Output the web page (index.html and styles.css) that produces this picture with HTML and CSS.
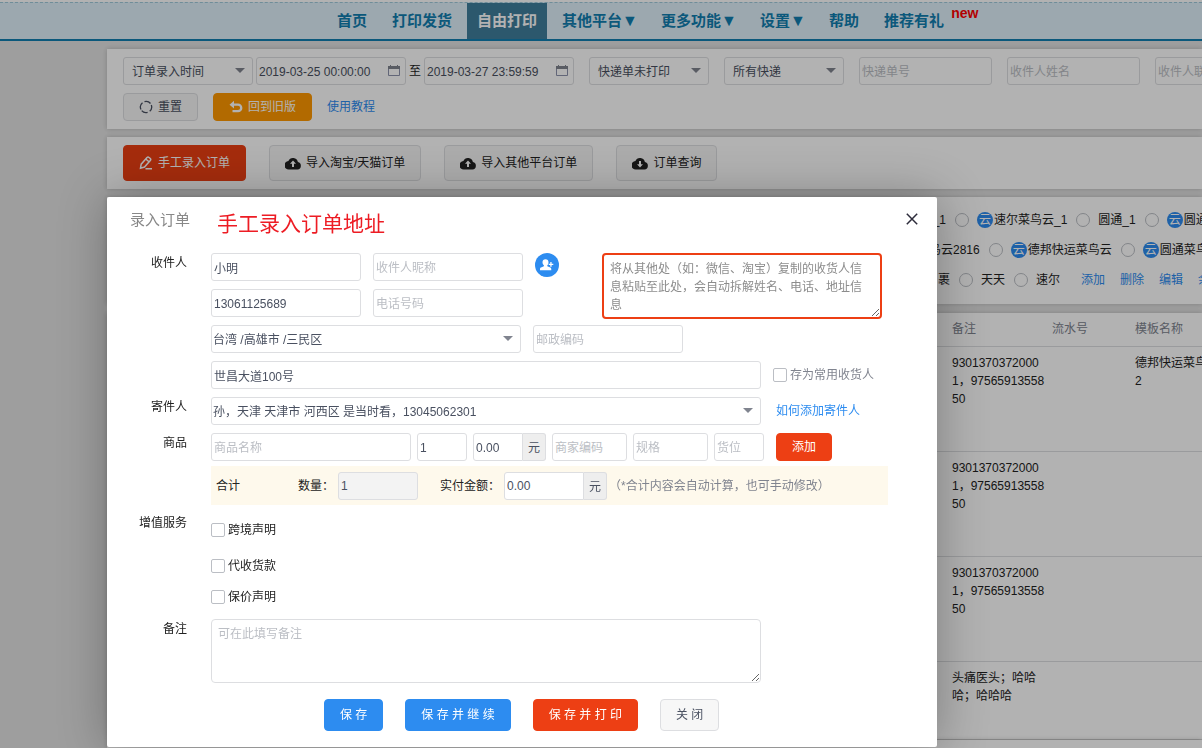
FILE: index.html
```html
<!DOCTYPE html>
<html lang="zh-CN">
<head>
<meta charset="utf-8">
<title>自由打印 - 录入订单</title>
<link rel="stylesheet" href="styles.css">
</head>
<body>
<div class="app">
  <nav class="nav">
    <a class="nav-item" href="#">首页</a>
    <a class="nav-item" href="#">打印发货</a>
    <a class="nav-item active" href="#">自由打印</a>
    <a class="nav-item" href="#">其他平台<span class="nav-caret">▼</span></a>
    <a class="nav-item" href="#">更多功能<span class="nav-caret">▼</span></a>
    <a class="nav-item" href="#">设置<span class="nav-caret">▼</span></a>
    <a class="nav-item" href="#">帮助</a>
    <a class="nav-item" href="#">推荐有礼<span class="nav-new">new</span></a>
  </nav>

  <main class="content">
    <section class="card filters">
      <div class="filter-row">
        <div class="filter-range">
          <span class="select w-130"><select class="field inset" aria-label="时间类型"><option>订单录入时间</option></select></span>
          <span class="date"><input class="field" type="text" value="2019-03-25 00:00:00" aria-label="开始时间"><svg class="cal" viewBox="0 0 12 12"><path d="M.5 1.500h11v9H.5z" fill="none" stroke="#8d92ad"/><path d="M0 1h12v3H0zM2 0h1v1H2zM9 0h1v1H9z" fill="#80848f"/></svg></span>
          <span class="to">至</span>
          <span class="date"><input class="field" type="text" value="2019-03-27 23:59:59" aria-label="结束时间"><svg class="cal" viewBox="0 0 12 12"><path d="M.5 1.500h11v9H.5z" fill="none" stroke="#8d92ad"/><path d="M0 1h12v3H0zM2 0h1v1H2zM9 0h1v1H9z" fill="#80848f"/></svg></span>
        </div>
        <span class="select w-120"><select class="field inset" aria-label="快递单状态"><option>快递单未打印</option></select></span>
        <span class="select w-120"><select class="field inset" aria-label="快递"><option>所有快递</option></select></span>
        <input class="field w-133" type="text" placeholder="快递单号" aria-label="快递单号">
        <input class="field w-133" type="text" placeholder="收件人姓名" aria-label="收件人姓名">
        <input class="field w-133" type="text" placeholder="收件人联系方式" aria-label="收件人联系方式">
      </div>
      <div class="filter-row">
        <button class="btn btn-small" type="button"><svg class="icon-14" viewBox="0 0 14 14" fill="none" stroke="#495060" stroke-width="1.300"><path d="M2 9.500A5.600 5.600 0 0 1 3.500 2.700M5.500 1.600A5.600 5.600 0 0 1 11.500 3.500M12.300 5A5.600 5.600 0 0 1 10.700 11.200M8.600 12.400A5.600 5.600 0 0 1 2.700 10.700"/></svg>重置</button>
        <button class="btn btn-small btn-orange" type="button"><svg class="icon-14" viewBox="0 0 14 14"><path d="M5 .8v2.700h4a4.400 4.400 0 0 1 0 8.800H3.500v-2.300H9a2.100 2.100 0 0 0 0-4.200H5v2.700L.5 4.700z" fill="currentColor"/></svg>回到旧版</button>
        <a class="link" href="#">使用教程</a>
      </div>
    </section>

    <section class="card toolbar">
      <button class="btn btn-tool btn-red" type="button"><svg class="icon-14" viewBox="0 0 14 14" fill="none" stroke="currentColor" stroke-width="1.500"><path d="m1.500 12.200.7-4L8 1.500q1-.8 2 0l1.300 1q.9 1 0 2L5.500 11z"/><path d="M7 3.200 10 5.800M6.500 12.700H13"/></svg>手工录入订单</button>
      <button class="btn btn-tool" type="button"><svg class="icon-16" viewBox="0 0 16 13"><path d="M12.900 5.100A5 5 0 0 0 3.400 4 4.200 4.200 0 0 0 4 12.500h8.500a3.750 3.750 0 0 0 .4-7.400z" fill="#222"/><path d="m8 3.500 3 3.200H9V10H7V6.700H5z" fill="#fff"/></svg>导入淘宝/天猫订单</button>
      <button class="btn btn-tool" type="button"><svg class="icon-16" viewBox="0 0 16 13"><path d="M12.900 5.100A5 5 0 0 0 3.400 4 4.200 4.200 0 0 0 4 12.500h8.500a3.750 3.750 0 0 0 .4-7.400z" fill="#222"/><path d="m8 3.500 3 3.200H9V10H7V6.700H5z" fill="#fff"/></svg>导入其他平台订单</button>
      <button class="btn btn-tool" type="button"><svg class="icon-16" viewBox="0 0 16 13"><path d="M12.900 5.100A5 5 0 0 0 3.400 4 4.200 4.200 0 0 0 4 12.500h8.500a3.750 3.750 0 0 0 .4-7.400z" fill="#222"/><path d="m8 10.500 3-3.200H9V4H7v3.300H5z" fill="#fff"/></svg>订单查询</button>
    </section>

    <section class="card couriers">
      <div class="courier-row">
        <span class="courier-name">_1</span>
        <label class="courier"><input class="radio" type="radio" name="courier"><span class="cloud">云</span>速尔菜鸟云_1</label>
        <label class="courier"><input class="radio" type="radio" name="courier">圆通_1</label>
        <label class="courier"><input class="radio" type="radio" name="courier"><span class="cloud">云</span>圆通菜鸟云</label>
      </div>
      <div class="courier-row">
        <span class="courier-name">鸟云2816</span>
        <label class="courier"><input class="radio" type="radio" name="courier"><span class="cloud">云</span>德邦快运菜鸟云</label>
        <label class="courier"><input class="radio" type="radio" name="courier"><span class="cloud">云</span>圆通菜鸟云</label>
      </div>
      <div class="courier-row last">
        <span class="courier-name">裹</span>
        <label class="courier"><input class="radio" type="radio" name="courier">天天</label>
        <label class="courier"><input class="radio" type="radio" name="courier">速尔</label>
        <span class="courier-links"><a class="link" href="#">添加</a><a class="link" href="#">删除</a><a class="link" href="#">编辑</a><a class="link" href="#">余额</a></span>
      </div>
    </section>

    <section class="card orders">
      <table class="table">
        <colgroup><col class="col-main"><col class="col-note"><col class="col-serial"><col class="col-template"></colgroup>
        <thead><tr><th></th><th>备注</th><th>流水号</th><th>模板名称</th></tr></thead>
        <tbody>
          <tr><td></td><td>9301370372000<br>1，97565913558<br>50</td><td></td><td>德邦快运菜鸟云<br>2</td></tr>
          <tr><td></td><td>9301370372000<br>1，97565913558<br>50</td><td></td><td></td></tr>
          <tr><td></td><td>9301370372000<br>1，97565913558<br>50</td><td></td><td></td></tr>
          <tr class="short"><td></td><td>头痛医头；哈哈<br>哈；哈哈哈</td><td></td><td></td></tr>
        </tbody>
      </table>
    </section>
    <section class="card footer-card"></section>
  </main>

  <div class="mask"></div>

  <div class="dialog" role="dialog" aria-labelledby="dialog-title">
    <header class="dialog-head">
      <h1 class="dialog-title" id="dialog-title">录入订单</h1>
      <strong class="dialog-note">手工录入订单地址</strong>
      <button class="close" type="button" aria-label="关闭窗口"><svg class="close-icon" viewBox="0 0 12 12"><path d="m.8.8 10.400 10.400M11.200.8.8 11.200" stroke="#2d2c3b" stroke-width="1.500"/></svg></button>
    </header>

    <form class="form">
      <div class="form-row">
        <label class="form-label" for="name">收件人</label>
        <div class="form-body">
          <div class="line line-top">
            <div class="pair">
              <input class="field" id="name" type="text" value="小明">
              <input class="field" type="text" placeholder="收件人昵称" aria-label="收件人昵称">
              <input class="field" type="text" value="13061125689" aria-label="手机号码">
              <input class="field" type="text" placeholder="电话号码" aria-label="电话号码">
            </div>
            <button class="add-person" type="button" aria-label="选择收件人"><svg class="person" viewBox="0 0 14 12"><path d="M5.500.3c1.900 0 3 1.300 3 3 0 1.300-.5 2.300-1.200 3v1l3 1.300c.8.400 1 1 1 2.600H0C0 9.600.1 9 .9 8.600l3-1.300v-1C3.100 5.600 2.500 4.600 2.500 3.300c0-1.700 1.100-3 3-3zM10.300 3h1.300v1.700h1.700V6h-1.700v1.700h-1.300V6H8.700V4.700h1.600z" fill="#fff"/></svg></button>
            <textarea class="paste" aria-label="粘贴地址" placeholder="将从其他处（如：微信、淘宝）复制的收货人信息粘贴至此处，会自动拆解姓名、电话、地址信息"></textarea>
          </div>
          <div class="line">
            <span class="select w-310"><select class="field" aria-label="地区"><option>台湾 /高雄市 /三民区</option></select></span>
            <input class="field w-150" type="text" placeholder="邮政编码" aria-label="邮政编码">
          </div>
          <div class="line">
            <input class="field w-550" type="text" value="世昌大道100号" aria-label="详细地址">
            <label class="check muted"><input class="box" type="checkbox">存为常用收货人</label>
          </div>
        </div>
      </div>

      <div class="form-row">
        <label class="form-label" for="sender">寄件人</label>
        <div class="form-body">
          <div class="line line-sender">
            <span class="select w-550"><select class="field" id="sender"><option>孙，天津 天津市 河西区 是当时看，13045062301</option></select></span>
            <a class="link" href="#">如何添加寄件人</a>
          </div>
        </div>
      </div>

      <div class="form-row">
        <label class="form-label" for="goods">商品</label>
        <div class="form-body goods">
          <div class="line line-goods">
            <input class="field w-200" id="goods" type="text" placeholder="商品名称">
            <input class="field w-50" type="text" value="1" aria-label="商品数量">
            <span class="money"><input class="field w-50" type="text" value="0.00" aria-label="单价"><span class="unit">元</span></span>
            <input class="field w-75" type="text" placeholder="商家编码" aria-label="商家编码">
            <input class="field w-75" type="text" placeholder="规格" aria-label="规格">
            <input class="field w-50" type="text" placeholder="货位" aria-label="货位">
            <button class="btn btn-red btn-add" type="button">添加</button>
          </div>
          <div class="summary">
            <span class="summary-title">合计</span>
            <label class="summary-item">数量：<input class="field w-80" type="text" value="1" disabled></label>
            <label class="summary-item" for="paid">实付金额：<span class="money"><input class="field w-80" id="paid" type="text" value="0.00"><span class="unit">元</span></span></label>
            <span class="muted">（*合计内容会自动计算，也可手动修改）</span>
          </div>
        </div>
      </div>

      <div class="form-row">
        <span class="form-label">增值服务</span>
        <div class="form-body services">
          <label class="check"><input class="box" type="checkbox">跨境声明</label>
          <label class="check"><input class="box" type="checkbox">代收货款</label>
          <label class="check tight"><input class="box" type="checkbox">保价声明</label>
        </div>
      </div>

      <div class="form-row">
        <label class="form-label" for="remark">备注</label>
        <div class="form-body"><textarea class="remark w-550" id="remark" placeholder="可在此填写备注"></textarea></div>
      </div>

      <div class="actions">
        <button class="btn btn-action btn-blue" type="button">保 存</button>
        <button class="btn btn-action btn-blue" type="button">保 存 并 继 续</button>
        <button class="btn btn-action btn-red" type="button">保 存 并 打 印</button>
        <button class="btn btn-action" type="button">关 闭</button>
      </div>
    </form>
  </div>
</div>
</body>
</html>
```
FILE: styles.css
```css
* { box-sizing: border-box; }

body, button, input, select, textarea {
  font-family: "Liberation Sans", "Noto Sans CJK SC", sans-serif;
  font-size: 12px;
}

body {
  margin: 0;
  line-height: 18px;
  color: #222;
  background: #e3e3e3;
}

a { text-decoration: none; }

.app {
  position: relative;
  min-height: 100vh;
  overflow: hidden;
  border-top: 2px solid #fff;
}

/* Navigation */
.nav {
  display: flex;
  gap: 5px;
  padding-left: 327px;
  background: #e0f1fb;
  border-top: 1px dashed #9fcbdc;
  border-bottom: 2px solid #117eb0;
}

.nav-item {
  padding: 0 10px;
  font-size: 15px;
  line-height: 36px;
  font-weight: bold;
  white-space: nowrap;
  color: #117eb0;
}

.nav-item.active {
  color: #fff;
  background: #3f7e9d;
}

.nav-caret {
  display: inline-block;
  width: 14px;
  font-size: 16px;
  text-align: center;
}

.nav-new {
  margin-left: 7px;
  font-size: 14px;
  line-height: 14px;
  vertical-align: 8px;
  color: #f00;
}

/* Cards */
.content {
  display: flex;
  flex-direction: column;
  gap: 8px;
  margin: 8px 0 0 107px;
}

.card {
  background: #fff;
  box-shadow: 0 0 5px rgba(0, 0, 0, 0.2);
}

.filters {
  display: flex;
  flex-direction: column;
  gap: 8px;
  padding: 8px 16px;
}

.filter-row {
  display: flex;
  align-items: center;
  gap: 15px;
}

.filter-range {
  display: flex;
  flex: none;
  align-items: center;
  gap: 3px;
}

.to { width: 12px; }

.toolbar {
  display: flex;
  gap: 23px;
  padding: 8px 16px;
}

/* Fields */
.field {
  flex: none;
  width: 100%;
  height: 28px;
  padding: 1px 2px 0;
  line-height: 18px;
  color: #495060;
  background: #fff;
  border: 1px solid #dddee1;
  border-radius: 3px;
}

.field:disabled { background: #f3f3f3; }

.field::placeholder, .remark::placeholder {
  color: #bbbec4;
  opacity: 1;
}

select.field {
  appearance: none;
  padding: 2px 24px 0 1px;
}

select.field.inset { padding-left: 8px; }

.select, .date {
  position: relative;
  flex: none;
}

.date { width: 150px; }

.select::after {
  content: "";
  position: absolute;
  top: 11px;
  right: 8px;
  border: 5px solid transparent;
  border-top-color: #80848f;
  border-bottom: 0;
}

.cal {
  position: absolute;
  top: 8px;
  right: 6px;
  width: 12px;
  height: 12px;
}

.w-50 { width: 50px; }
.w-75 { width: 75px; }
.w-80 { width: 80px; }
.w-120 { width: 120px; }
.w-130 { width: 130px; }
.w-133 { width: 133px; }
.w-150 { width: 150px; }
.w-200 { width: 200px; }
.w-310 { width: 310px; }
.w-550 { width: 550px; }

/* Buttons */
.btn {
  display: flex;
  flex: none;
  align-items: center;
  justify-content: center;
  gap: 5px;
  padding: 0 15px;
  line-height: 18px;
  color: #495060;
  background: #f7f7f7;
  border: 1px solid #dddee1;
  border-radius: 4px;
}

.btn-small { height: 28px; }

.btn-tool {
  height: 36px;
  color: #222;
}

.btn-action { height: 32px; }

.btn-add {
  height: 28px;
  margin-left: 6px;
}

.btn-red {
  color: #fff;
  background: #ed3f14;
  border-color: #ed3f14;
}

.btn-blue {
  color: #fff;
  background: #2d8cf0;
  border-color: #2d8cf0;
}

.btn-orange {
  color: #fff;
  background: #f90;
  border-color: #f90;
}

.icon-14 { width: 14px; height: 14px; }
.icon-16 { width: 16px; height: 13px; }
.link { color: #2d8cf0; white-space: nowrap; }
.muted { color: #80848f; }

/* Courier list */
.couriers {
  margin-bottom: 1px;
  padding: 8px 0 9px 822px;
}

.courier-row {
  display: flex;
  align-items: center;
  gap: 9px;
  height: 30px;
  white-space: nowrap;
}

.courier-row.last { padding-left: 4px; }

.courier-name {
  flex: none;
  min-width: 17px;
  text-align: right;
}

.courier {
  display: flex;
  flex: none;
  align-items: center;
}

.radio {
  appearance: none;
  width: 14px;
  height: 14px;
  margin: 0 8px 0 0;
  border: 1px solid #bbbec4;
  border-radius: 50%;
}

.cloud {
  width: 16px;
  height: 16px;
  margin-right: 1px;
  line-height: 16px;
  text-align: center;
  color: #fff;
  background: #2d8cf0;
  border-radius: 50%;
}

.courier-links {
  display: flex;
  gap: 15px;
  margin-left: 12px;
}

/* Orders table */
.table {
  table-layout: fixed;
  width: 1128px;
  border-collapse: collapse;
}

.orders { overflow: hidden; }
.col-main { width: 845px; }
.col-note { width: 100px; }
.col-serial { width: 83px; }
.col-template { width: 100px; }

.table th {
  height: 33px;
  padding: 0;
  font-weight: normal;
  text-align: left;
  color: #80848f;
  border-bottom: 1px solid #dddee1;
}

.table td {
  height: 105px;
  padding: 7px 0;
  vertical-align: top;
  border-bottom: 1px solid #dddee1;
}

.table .short td {
  height: 78px;
  border-bottom: 0;
}

.footer-card {
  height: 8px;
  margin-top: -7px;
}

/* Dialog */
.mask {
  position: fixed;
  inset: 0;
  background: rgba(0, 0, 0, 0.3);
}

.dialog {
  position: absolute;
  top: 195px;
  left: 107px;
  width: 830px;
  background: #fff;
  border-radius: 2px;
  box-shadow: 1px 1px 50px rgba(0, 0, 0, 0.3);
}

.dialog-head {
  display: flex;
  align-items: flex-start;
  gap: 27px;
  height: 56px;
  padding: 12px 15px 0 23px;
}

.dialog-title {
  margin: 0;
  font-size: 15px;
  line-height: 22px;
  font-weight: normal;
  color: #888;
}

.dialog-note {
  font-size: 21px;
  line-height: 30px;
  font-weight: normal;
  color: #ed1c24;
}

.close {
  display: flex;
  margin-left: auto;
  padding: 2px;
  background: none;
  border: 0;
}

.close-icon {
  width: 16px;
  height: 16px;
  padding: 2px;
}

.form {
  display: flex;
  flex-direction: column;
  gap: 8px;
  padding-bottom: 16px;
}

.form-row {
  display: flex;
  gap: 24px;
}

.form-label {
  flex: none;
  width: 80px;
  padding-top: 1px;
  text-align: right;
}

.form-body {
  display: flex;
  flex: 1;
  flex-direction: column;
  gap: 8px;
}

.line {
  display: flex;
  align-items: center;
  gap: 12px;
}

.line-top {
  align-items: flex-start;
  margin-bottom: -2px;
}

.line-sender { gap: 15px; }
.line-goods { gap: 6px; }
.goods { gap: 5px; }

.pair {
  display: grid;
  grid-template-columns: 150px 150px;
  gap: 8px 12px;
}

.add-person {
  display: flex;
  align-items: center;
  justify-content: center;
  width: 24px;
  height: 24px;
  padding: 0;
  background: #2d8cf0;
  border: 0;
  border-radius: 50%;
}

.person { width: 14px; height: 12px; }

.paste {
  width: 280px;
  height: 66px;
  margin-left: 31px;
  padding: 5px 8px 3px 6px;
  line-height: 18px;
  border: 2px solid #ed3f14;
  border-radius: 4px;
}

.paste::placeholder {
  color: #8c8c8c;
  opacity: 1;
}

.remark {
  display: block;
  height: 64px;
  padding: 5px 6px;
  line-height: 18px;
  color: #495060;
  border: 1px solid #dddee1;
  border-radius: 4px;
}

.check {
  display: flex;
  align-items: center;
  gap: 3px;
  height: 28px;
}

.box {
  appearance: none;
  width: 14px;
  height: 14px;
  margin: 0;
  background: #fff;
  border: 1px solid #bbbec4;
  border-radius: 2px;
}

.money { display: flex; }

.money .field { border-radius: 3px 0 0 3px; }

.unit {
  width: 23px;
  height: 28px;
  line-height: 28px;
  text-align: center;
  color: #495060;
  background: #eee;
  border: 1px solid #dddee1;
  border-left: 0;
  border-radius: 0 3px 3px 0;
}

.summary {
  display: flex;
  align-items: center;
  gap: 22px;
  width: 677px;
  height: 39px;
  padding-left: 5px;
  background: #fef9ec;
}

.summary-title { width: 60px; }

.summary-item {
  display: flex;
  align-items: center;
  gap: 4px;
}

.summary > .muted { margin-left: -20px; }

.services { padding-top: 3px; }
.tight { margin-top: -5px; }

.actions {
  display: flex;
  gap: 22px;
  margin-top: 8px;
  padding-left: 217px;
}
```
